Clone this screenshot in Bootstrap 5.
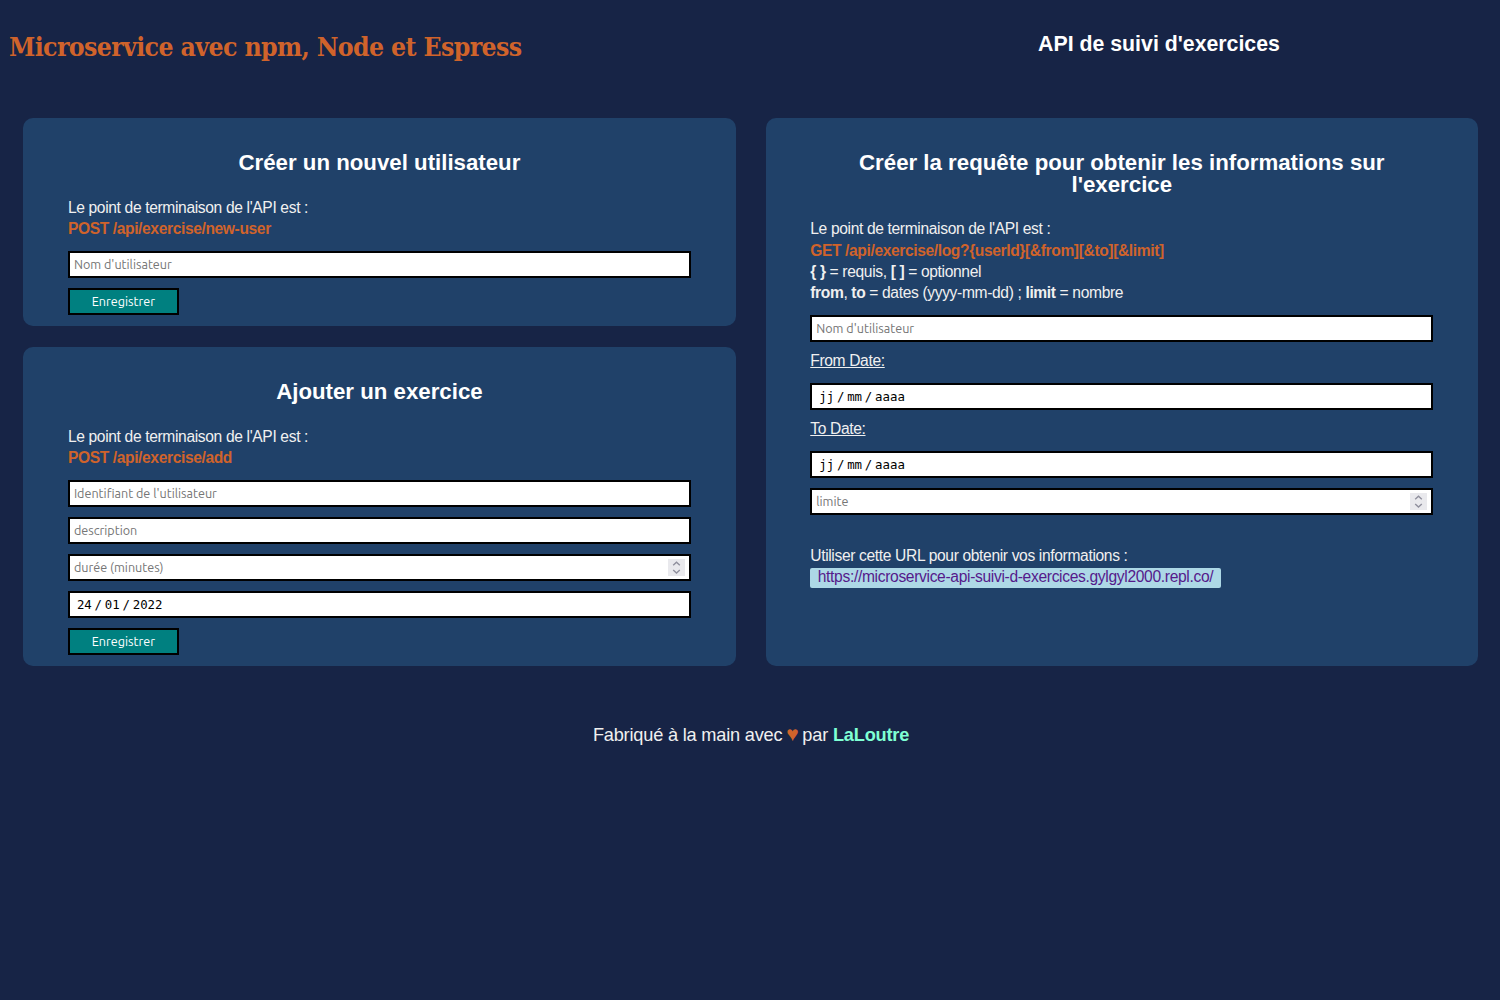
<!DOCTYPE html>
<html lang="fr">
<head>
<meta charset="utf-8">
<meta name="viewport" content="width=device-width, initial-scale=1">
<title>API de suivi d'exercices</title>
<link href="https://cdn.jsdelivr.net/npm/bootstrap@5.3.0/dist/css/bootstrap.min.css" rel="stylesheet">
<style>
body{background:#172446;color:#f0f0f0;font-family:"Liberation Sans",sans-serif;font-size:15.6px;line-height:21.35px}
.site-head{height:118px;padding:0 8px}
.site-title{font-family:"Roboto Slab","DejaVu Serif Condensed","DejaVu Serif",serif;font-stretch:condensed;font-weight:700;font-size:26.4px;letter-spacing:-.63px;line-height:32px;color:#d0632b;padding:31px 0 0 1px;white-space:nowrap}
.site-sub{width:666px;padding-top:34px;color:#fff;font-size:21.3px;font-weight:700;line-height:21.35px;text-align:center}
.panels{padding:0 21.9px 0 23.4px;gap:30px}
.stack{gap:21.5px}
.panel{background:#204169;border-radius:10px;padding:34.3px 44.8px 10.8px 44.5px}
.panel h2{font-size:22.25px;line-height:21.35px;font-weight:700;color:#fff;text-align:center;margin:0 0 23.2px}
.panel p{margin:0 0 11px}
.panel p,.field-label,.result{letter-spacing:-.35px}
.panel p b,.route{letter-spacing:-.38px}
.route{color:#d0632b;font-weight:700}
.panel .form-control{height:27.5px;border:2px solid #000;border-radius:0;padding:0 4px;font-family:Ubuntu,"Noto Sans",sans-serif;font-size:12.6px;line-height:23px;color:#000;background:#fff}
.panel .form-control::placeholder{color:#757575;opacity:1}
.panel .date-field{font-family:"DejaVu Sans Mono",monospace;font-size:12.4px;word-spacing:-4.7px;padding-left:7px}
.fields{gap:9.5px}
.send{width:111px;height:27.3px;padding:0;border:2px solid #000;border-radius:0;background:#008080;color:#fff;font-family:Ubuntu,"Noto Sans",sans-serif;font-size:12.6px;line-height:23px}
.spin{position:absolute;right:6px;top:5.5px;width:17px;height:17px}
.field-label{line-height:21.5px;text-decoration:underline;margin:-2px 0 2px}
.result{padding-top:30px}
.result a{display:inline-block;height:19.3px;line-height:17px;padding:0 7.5px;border-radius:2px;background:#add8e6;color:#551a8b;text-decoration:none;letter-spacing:-.33px}
.site-foot{padding:57px 0 0 2px;font-size:18.2px;line-height:24px;letter-spacing:-.2px}
.heart{color:#d0632b;font-size:21px;line-height:20px;margin:0 -1px}
.author{color:#7fffd4;font-weight:700;text-decoration:none}
</style>
</head>
<body>
<header class="site-head d-flex justify-content-between">
  <h1 class="site-title mb-0">Microservice avec npm, Node et Espress</h1>
  <div class="site-sub">API de suivi d'exercices</div>
</header>
<main class="panels d-flex">
  <div class="stack d-flex flex-column w-50">
    <section class="panel">
      <h2>Créer un nouvel utilisateur</h2>
      <p>Le point de terminaison de l'API est :<br><span class="route">POST /api/exercise/new-user</span></p>
      <form class="fields d-flex flex-column">
        <input class="form-control" placeholder="Nom d'utilisateur">
        <button type="button" class="btn send">Enregistrer</button>
      </form>
    </section>
    <section class="panel">
      <h2>Ajouter un exercice</h2>
      <p>Le point de terminaison de l'API est :<br><span class="route">POST /api/exercise/add</span></p>
      <form class="fields d-flex flex-column">
        <input class="form-control" placeholder="Identifiant de l'utilisateur">
        <input class="form-control" placeholder="description">
        <div class="position-relative">
          <input class="form-control" placeholder="durée (minutes)">
          <svg class="spin" viewBox="0 0 17 17"><path fill="#e9e9ed" d="M0 0h17v17H0z"/><path fill="none" stroke="#8f8f9d" stroke-width="1.4" d="M5.2 6.3l3.3-3 3.3 3M5.2 11l3.3 3 3.3-3"/></svg>
        </div>
        <input class="form-control date-field" value="24 / 01 / 2022">
        <button type="button" class="btn send">Enregistrer</button>
      </form>
    </section>
  </div>
  <div class="d-flex flex-column w-50">
    <section class="panel flex-fill">
      <h2>Créer la requête pour obtenir les informations sur l'exercice</h2>
      <p>Le point de terminaison de l'API est :<br><span class="route">GET /api/exercise/log?{userId}[&amp;from][&amp;to][&amp;limit]</span><br><b>{ }</b> = requis, <b>[ ]</b> = optionnel<br><b>from</b>, <b>to</b> = dates (yyyy-mm-dd) ; <b>limit</b> = nombre</p>
      <form class="fields d-flex flex-column">
        <input class="form-control" placeholder="Nom d'utilisateur">
        <label class="field-label align-self-start">From Date:</label>
        <input class="form-control date-field" value="jj / mm / aaaa">
        <label class="field-label align-self-start">To Date:</label>
        <input class="form-control date-field" value="jj / mm / aaaa">
        <div class="position-relative">
          <input class="form-control" placeholder="limite">
          <svg class="spin" viewBox="0 0 17 17"><path fill="#e9e9ed" d="M0 0h17v17H0z"/><path fill="none" stroke="#8f8f9d" stroke-width="1.4" d="M5.2 6.3l3.3-3 3.3 3M5.2 11l3.3 3 3.3-3"/></svg>
        </div>
      </form>
      <div class="result">Utiliser cette URL pour obtenir vos informations :<br><a href="#">https://microservice-api-suivi-d-exercices.gylgyl2000.repl.co/</a></div>
    </section>
  </div>
</main>
<footer class="site-foot text-center">Fabriqué à la main avec <span class="heart">♥</span> par <a class="author" href="#">LaLoutre</a></footer>
<script src="https://cdn.jsdelivr.net/npm/bootstrap@5.3.0/dist/js/bootstrap.bundle.min.js"></script>
</body>
</html>
